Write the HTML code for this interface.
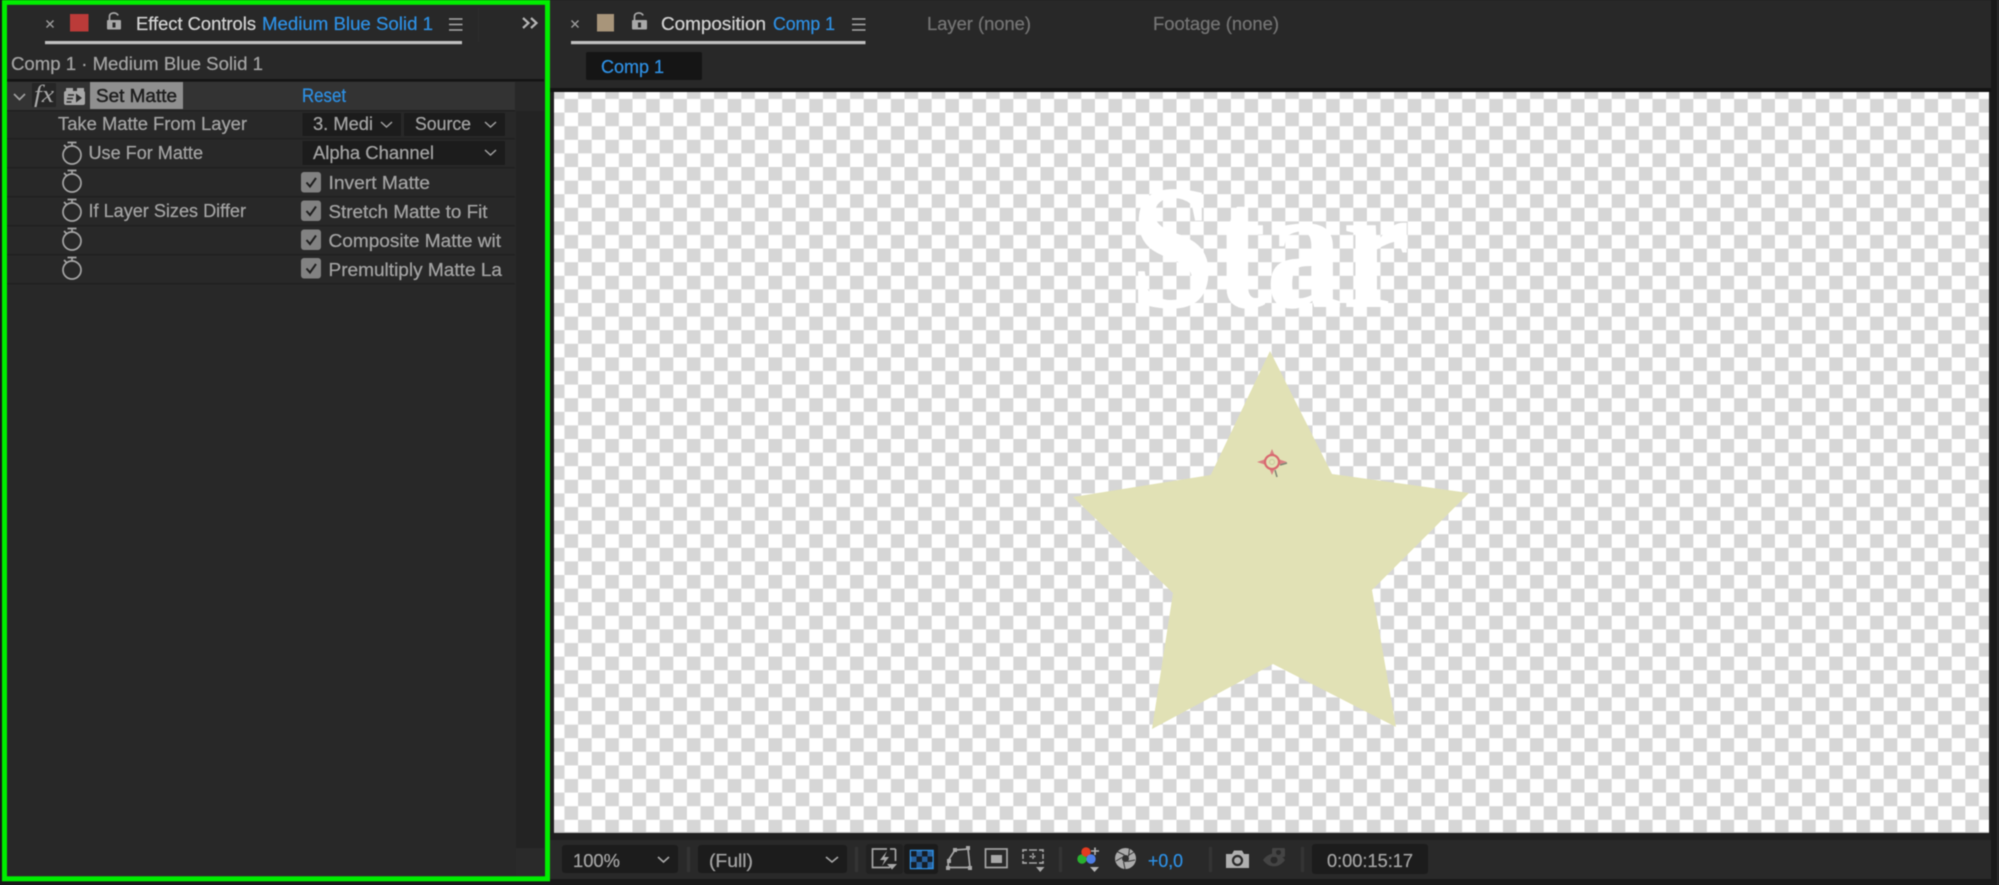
<!DOCTYPE html>
<html><head><meta charset="utf-8"><title>Effect Controls</title>
<style>
html,body{margin:0;padding:0;background:#1a1a1a;width:1999px;height:885px;overflow:hidden}
svg{display:block;filter:blur(.45px)}
text{font-family:"Liberation Sans",sans-serif;font-size:18px;fill:#a3a3a3;stroke:#a3a3a3;stroke-width:.25px}
.b{fill:#2e8fe2;stroke:#2e8fe2}
.w{fill:#d2d2d2;stroke:#d2d2d2}
.d{fill:#747474;stroke:#747474}
.i{fill:none;stroke:#a5a5a5;stroke-width:1.7}
.sep{fill:#343434}
.box{fill:#1c1c1c}
</style></head><body>
<svg width="1999" height="885" viewBox="0 0 1999 885" xmlns="http://www.w3.org/2000/svg">
<defs>
<pattern id="ck" x="550.9" y="85.4" width="27.2" height="27.2" patternUnits="userSpaceOnUse">
<rect width="27.2" height="27.2" fill="#fff"/>
<rect width="13.6" height="13.6" fill="#d6d6d6"/>
<rect x="13.6" y="13.6" width="13.6" height="13.6" fill="#d6d6d6"/>
</pattern>
<g id="sw"><circle cx="0" cy="0" r="9" class="i"/><path d="M-4.500-12.500H4.500M0-12.500V-9M-8-10L-5.500-7.500" class="i"/></g>
<g id="cb"><rect x="0" y="0" width="20" height="20.500" rx="3" fill="#828282"/><path d="M5.500 10.500L9 14.500L15 6" fill="none" stroke="#1f1f1f" stroke-width="2"/></g>
</defs>

<rect width="1999" height="885" fill="#191919"/>
<!-- left panel -->
<rect x="2" y="0" width="548" height="881" fill="#282828"/>
<rect x="516" y="111" width="28" height="737" fill="#232323"/>
<rect x="516" y="848" width="28" height="28" fill="#2a2a2a"/>
<rect x="7" y="79" width="537" height="2.500" fill="#141414"/>
<rect x="478" y="8" width="1" height="34" fill="#2e2e2e"/>

<!-- tab header left -->
<path d="M46.500 20.500L53.500 27.500M53.500 20.500L46.500 27.500" stroke="#9a9a9a" stroke-width="1.500"/>
<rect x="70" y="14" width="18.500" height="17.500" fill="#bb3b39"/>
<rect x="107" y="20" width="14" height="9.500" rx="1" fill="#a8a8a8"/>
<rect x="112.500" y="22.500" width="3" height="5" fill="#282828"/>
<path d="M109.500 20V16.500C109.500 12 117 12 118 15.500" class="i"/>
<text x="136" y="30" class="w" textLength="120" lengthAdjust="spacingAndGlyphs">Effect Controls</text>
<text x="262" y="30" class="b" textLength="171" lengthAdjust="spacingAndGlyphs">Medium Blue Solid 1</text>
<path d="M449 19H462.500M449 24.500H462.500M449 30H462.500" stroke="#a8a8a8" stroke-width="1.500"/>
<rect x="45" y="41" width="417" height="3.200" fill="#c0c0c0"/>
<path d="M523 18L528.500 23L523 28M531 18L536.500 23L531 28" fill="none" stroke="#b5b5b5" stroke-width="2.200"/>
<text x="11" y="70" textLength="252" lengthAdjust="spacingAndGlyphs">Comp 1 · Medium Blue Solid 1</text>

<!-- effect rows -->
<rect x="7" y="82" width="508" height="28" fill="#333"/>
<path d="M14 94L19.500 99.500L25 94" fill="none" stroke="#a0a0a0" stroke-width="1.700"/>
<rect x="32" y="83" width="24" height="24" fill="#262626"/>
<text x="34" y="102" style="font-family:'Liberation Serif',serif;font-style:italic;font-size:24px;fill:#a8a8a8;stroke:none" textLength="20" lengthAdjust="spacingAndGlyphs">fx</text>
<path d="M64 93a2 2 0 0 1 2-2V88h7v3h4V88h7v3a2 2 0 0 1 1 2v10a2 2 0 0 1-2 2H66a2 2 0 0 1-2-2z" fill="#a8a8a8"/>
<path d="M68 95h6M67 98.500h6M66.500 102h5" stroke="#2c2c2c" stroke-width="1.400"/>
<path d="M76 93.500L82 98L76 102.500z" fill="#2c2c2c"/>
<rect x="90" y="82" width="93" height="27" fill="#8f8f8f"/>
<text x="96" y="102" style="fill:#1f1f1f;stroke:#1f1f1f;stroke-width:.5px" textLength="81" lengthAdjust="spacingAndGlyphs">Set Matte</text>
<text x="302" y="102" class="b" style="font-size:19px" textLength="44" lengthAdjust="spacingAndGlyphs">Reset</text>

<g fill="#202020">
<rect x="7" y="110" width="508" height="1.500"/><rect x="7" y="138" width="508" height="1.500"/><rect x="7" y="167" width="508" height="1.500"/><rect x="7" y="196" width="508" height="1.500"/><rect x="7" y="225" width="508" height="1.500"/><rect x="7" y="254" width="508" height="1.500"/><rect x="7" y="283" width="508" height="1.500"/>
</g>

<text x="58" y="130" textLength="189" lengthAdjust="spacingAndGlyphs">Take Matte From Layer</text>
<rect x="302.500" y="113" width="98.500" height="23" class="box"/>
<text x="313" y="130" textLength="60" lengthAdjust="spacingAndGlyphs">3. Medi</text>
<path d="M381 122L386.500 127L392 122" fill="none" stroke="#a0a0a0" stroke-width="1.500"/>
<rect x="404" y="113" width="101" height="23" class="box"/>
<text x="415" y="130" textLength="56" lengthAdjust="spacingAndGlyphs">Source</text>
<path d="M485 122L490.500 127L496 122" fill="none" stroke="#a0a0a0" stroke-width="1.500"/>

<use href="#sw" x="72" y="155"/>
<text x="88.500" y="159" textLength="114.500" lengthAdjust="spacingAndGlyphs">Use For Matte</text>
<rect x="302.500" y="141" width="202.500" height="24" class="box"/>
<text x="313" y="159" textLength="121" lengthAdjust="spacingAndGlyphs">Alpha Channel</text>
<path d="M485 150L490.500 155L496 150" fill="none" stroke="#a0a0a0" stroke-width="1.500"/>

<use href="#sw" x="72" y="183"/>
<use href="#cb" x="301" y="172"/>
<text x="328.500" y="189" textLength="101.500" lengthAdjust="spacingAndGlyphs">Invert Matte</text>

<use href="#sw" x="72" y="212"/>
<text x="88.500" y="217" textLength="157.500" lengthAdjust="spacingAndGlyphs">If Layer Sizes Differ</text>
<use href="#cb" x="301" y="200.500"/>
<text x="328.500" y="218" textLength="159" lengthAdjust="spacingAndGlyphs">Stretch Matte to Fit</text>

<use href="#sw" x="72" y="241"/>
<use href="#cb" x="301" y="229.500"/>
<text x="328.500" y="247" textLength="172.500" lengthAdjust="spacingAndGlyphs">Composite Matte wit</text>

<use href="#sw" x="72" y="270"/>
<use href="#cb" x="301" y="258"/>
<text x="328.500" y="276" textLength="173.500" lengthAdjust="spacingAndGlyphs">Premultiply Matte La</text>

<!-- green outline -->
<rect x="4.500" y="2.300" width="543" height="876.500" fill="none" stroke="#00ee00" stroke-width="5"/>

<!-- right panel -->
<rect x="550" y="0" width="1441" height="879" fill="#282828"/>
<rect x="550" y="88" width="1441" height="4" fill="#141414"/>
<rect x="550" y="92" width="4" height="741" fill="#202020"/>
<rect x="1989" y="92" width="2" height="741" fill="#202020"/>
<rect x="1997" y="0" width="2" height="885" fill="#2a2a2a"/>

<path d="M571.500 20.500L578.500 27.500M578.500 20.500L571.500 27.500" stroke="#9a9a9a" stroke-width="1.500"/>
<rect x="597" y="14" width="17" height="17.500" fill="#a8957a"/>
<rect x="632" y="20" width="15" height="9.500" rx="1" fill="#a8a8a8"/>
<rect x="638" y="22.500" width="3" height="5" fill="#282828"/>
<path d="M634.500 20V16.500C634.500 12 642 12 643 15.500" class="i"/>
<text x="661" y="30" class="w" textLength="105" lengthAdjust="spacingAndGlyphs">Composition</text>
<text x="773" y="30" class="b" textLength="62" lengthAdjust="spacingAndGlyphs">Comp 1</text>
<path d="M852 19H865.500M852 24.500H865.500M852 30H865.500" stroke="#a8a8a8" stroke-width="1.500"/>
<rect x="571" y="41" width="294.500" height="3.200" fill="#c0c0c0"/>
<text x="927" y="30" class="d" textLength="104" lengthAdjust="spacingAndGlyphs">Layer (none)</text>
<text x="1153" y="30" class="d" textLength="126" lengthAdjust="spacingAndGlyphs">Footage (none)</text>
<rect x="586" y="52" width="116" height="28" rx="2" fill="#151515"/>
<text x="601" y="73" class="b" textLength="63" lengthAdjust="spacingAndGlyphs">Comp 1</text>

<!-- comp viewer -->
<rect x="554" y="92" width="1435" height="741" fill="url(#ck)"/>
<text x="1130" y="307" style="font-family:'Liberation Serif',serif;font-weight:bold;font-size:178px;fill:#fff;stroke:none" textLength="280" lengthAdjust="spacingAndGlyphs">Star</text>
<polygon points="1270,351 1332,474 1469,493 1372,590 1396,727 1273,664 1152,729 1173,593 1073,497 1210.700,475" fill="#e1e1b5"/>
<path d="M1272 449L1275 456H1269zM1272 475L1275 468H1269zM1257 462L1266 459V465zM1287 462L1278 459V465z" fill="#d97f82"/>
<circle cx="1272" cy="462" r="7" fill="none" stroke="#d9696f" stroke-width="2.200"/>
<circle cx="1272" cy="462" r="2.500" fill="none" stroke="#c9c99a" stroke-width="1"/>
<path d="M1275 470L1277 477M1280 465L1287 463" stroke="#7f8574" stroke-width="1.500"/>

<!-- bottom toolbar -->
<rect x="550" y="833" width="1441" height="7" fill="#1f1f1f"/>
<rect x="554" y="832" width="1435" height="1" fill="#bbb"/>
<rect x="550" y="840" width="1441" height="39" fill="#292929"/>

<rect x="562" y="845" width="116" height="28" rx="3" class="box"/>
<text x="573" y="867" textLength="47" lengthAdjust="spacingAndGlyphs">100%</text>
<path d="M658 857L663.500 862L669 857" fill="none" stroke="#a8a8a8" stroke-width="1.600"/>
<rect x="687" y="847" width="3" height="25" class="sep"/>
<rect x="698" y="845" width="149" height="28" rx="3" class="box"/>
<text x="709" y="867" textLength="44" lengthAdjust="spacingAndGlyphs">(Full)</text>
<path d="M826 857L832 862L838 857" fill="none" stroke="#a8a8a8" stroke-width="1.600"/>
<rect x="855" y="847" width="3" height="25" class="sep"/>

<rect x="866" y="844" width="37" height="30" rx="3" fill="#212121"/>
<path d="M887 849H872.500V867.500H890M895.500 849H890M895.500 849V861" class="i"/>
<path d="M887 851L880 860H884.500L882 866L889 857H884.500z" fill="#a8a8a8"/>
<path d="M887 864H897L892 869.500z" fill="#a8a8a8"/>

<rect x="904" y="844" width="34" height="30" rx="3" fill="#1b1b1b"/>
<rect x="910.500" y="850.500" width="22.500" height="18" fill="#27609c" stroke="#2e8fe2" stroke-width="1.500"/>
<path d="M911 851h5.500v5.500H911zM922 851h5.500v5.500H922zM916.500 856.500h5.500v5.500h-5.500zM927.500 856.500h5v5.500h-5zM911 862h5.500v6H911zM922 862h5.500v6H922z" fill="#151d26"/>

<path d="M948 867.500H970L968 849L955 850L948.500 860z" class="i"/>
<path d="M946 866h4v4h-4zM968 866h4v4h-4zM966 846h4v4h-4zM953 848h4v4h-4zM947 859h4v4h-4z" fill="#a8a8a8"/>

<rect x="985.500" y="849" width="21.500" height="18.500" class="i"/>
<rect x="991" y="855" width="11" height="8" fill="#a8a8a8"/>

<path d="M1023 852V850H1027M1039 850H1043V852M1043 861V863H1039M1027 863H1023V861" class="i"/>
<path d="M1029 850H1037M1029 863H1037M1023 854V859M1043 854V859" stroke="#a5a5a5" stroke-width="1.500"/>
<path d="M1033 853V860M1029.500 856.500H1036.500" stroke="#a5a5a5" stroke-width="1.500" stroke-dasharray="2.500 1"/>
<path d="M1036 867H1044.500L1040.200 872z" fill="#a8a8a8"/>

<rect x="1059" y="847" width="3" height="25" class="sep"/>
<circle cx="1082" cy="859" r="4.700" fill="#29b12f"/>
<circle cx="1086" cy="852" r="4.700" fill="#e33b20"/>
<circle cx="1091" cy="859" r="4.700" fill="#4d7de6"/>
<path d="M1095 847.500V855M1091 851H1099" stroke="#b5b5b5" stroke-width="1.600"/>
<path d="M1090 867H1099L1094.500 872z" fill="#b5b5b5"/>

<circle cx="1125.500" cy="858.500" r="10.500" fill="#ababab"/>
<circle cx="1125.500" cy="858.500" r="3.500" fill="#303030"/>
<path d="M1128.500 856.500L1129.500 848.500M1127.500 861.500L1135 860M1123.500 861.500L1125 869M1122 857.500L1116 861M1124.500 855L1117 851.500M1128 855.500L1134 852" stroke="#333" stroke-width="1" fill="none"/>

<text x="1148" y="867" class="b" textLength="35" lengthAdjust="spacingAndGlyphs">+0,0</text>
<rect x="1209" y="847" width="3" height="25" class="sep"/>
<path d="M1226 854H1232L1234 850.500H1242L1244 854H1249V868H1226z" fill="#b0b0b0"/>
<circle cx="1237.500" cy="860.500" r="4.500" fill="none" stroke="#2a2a2a" stroke-width="2.200"/>
<path d="M1263 860C1269 851.500 1279 851.500 1285 860C1279 868.500 1269 868.500 1263 860z" fill="#444"/>
<circle cx="1274" cy="860" r="3.500" fill="#292929"/>
<rect x="1272" y="848" width="13" height="9" rx="1.500" fill="#444"/>
<circle cx="1278.500" cy="852.500" r="2.500" fill="#292929"/>
<rect x="1301" y="847" width="3" height="25" class="sep"/>
<rect x="1312" y="844" width="116" height="30" rx="3" class="box"/>
<text x="1327" y="867" textLength="86" lengthAdjust="spacingAndGlyphs">0:00:15:17</text>
</svg>
</body></html>
